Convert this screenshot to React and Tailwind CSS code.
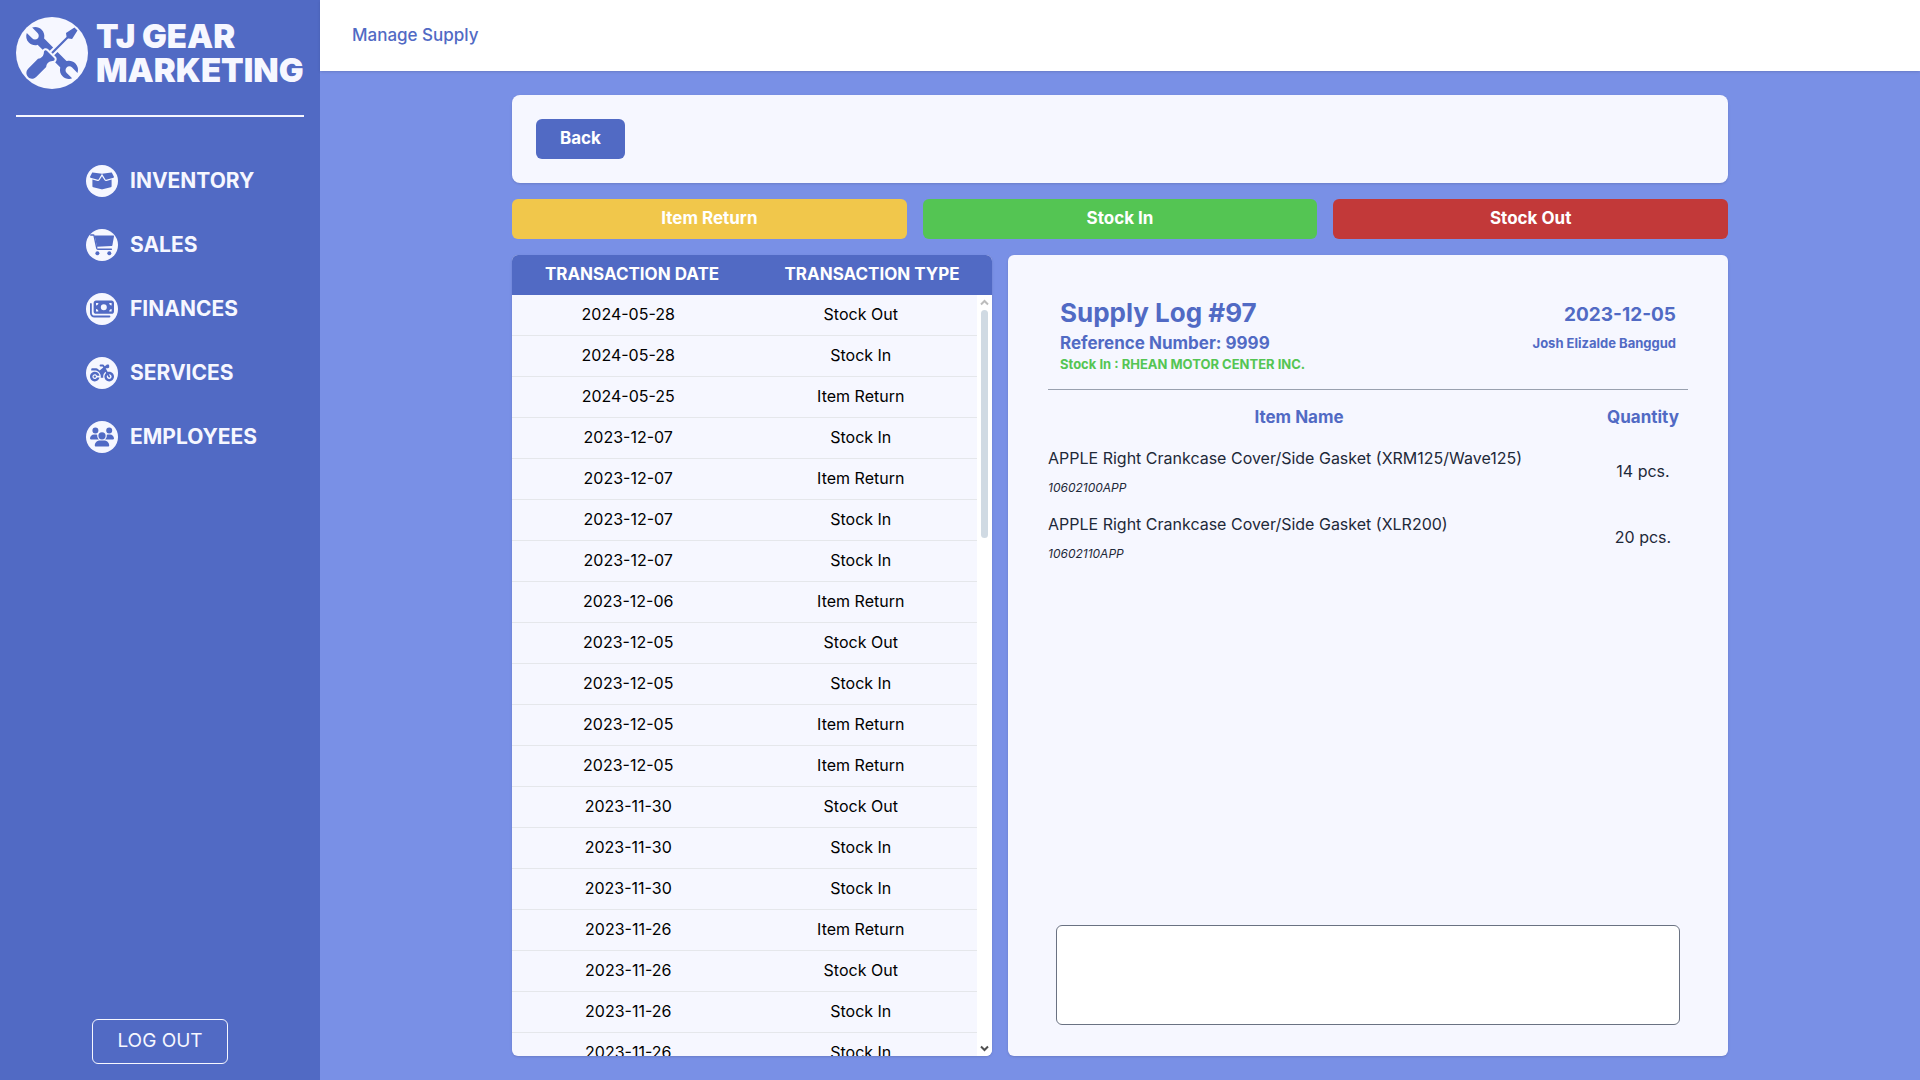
import React from "react";
import { FaBoxOpen } from "react-icons/fa";
import { FaMoneyBills, FaMotorcycle, FaUsers } from "react-icons/fa6";
import { GiTinker } from "react-icons/gi";

function CartIcon({ className }) {
  return (
    <svg className={className} viewBox="0 0 24 24" fill="currentColor" aria-hidden="true">
      <path d="M4.6 2.4H23.4Q24.2 2.4 24 3.3L22.4 12.2Q22.2 13 21.3 13.1L7 13.7Z" />
      <path
        d="M.7 2H3.2Q3.9 2 4.1 2.8L6.8 15.4Q7 16.2 7.8 16.2H21.4"
        fill="none"
        stroke="currentColor"
        strokeWidth="1.4"
        strokeLinecap="round"
      />
      <circle cx="7.4" cy="20.3" r="2" />
      <circle cx="19.3" cy="20.3" r="2" />
    </svg>
  );
}

const navItems = [
  { label: "INVENTORY", Icon: FaBoxOpen },
  { label: "SALES", Icon: CartIcon },
  { label: "FINANCES", Icon: FaMoneyBills },
  { label: "SERVICES", Icon: FaMotorcycle },
  { label: "EMPLOYEES", Icon: FaUsers },
];

const transactions = [
  ["2024-05-28", "Stock Out"],
  ["2024-05-28", "Stock In"],
  ["2024-05-25", "Item Return"],
  ["2023-12-07", "Stock In"],
  ["2023-12-07", "Item Return"],
  ["2023-12-07", "Stock In"],
  ["2023-12-07", "Stock In"],
  ["2023-12-06", "Item Return"],
  ["2023-12-05", "Stock Out"],
  ["2023-12-05", "Stock In"],
  ["2023-12-05", "Item Return"],
  ["2023-12-05", "Item Return"],
  ["2023-11-30", "Stock Out"],
  ["2023-11-30", "Stock In"],
  ["2023-11-30", "Stock In"],
  ["2023-11-26", "Item Return"],
  ["2023-11-26", "Stock Out"],
  ["2023-11-26", "Stock In"],
  ["2023-11-26", "Stock In"],
];

const items = [
  { name: "APPLE Right Crankcase Cover/Side Gasket (XRM125/Wave125)", code: "10602100APP", qty: "14 pcs." },
  { name: "APPLE Right Crankcase Cover/Side Gasket (XLR200)", code: "10602110APP", qty: "20 pcs." },
];

function Sidebar() {
  return (
    <aside className="flex w-80 shrink-0 flex-col bg-[#516ac4] px-4 pb-4 pt-[17px] text-[#f6f7ff]">
      <div className="flex items-center gap-2 border-b-2 border-[#f6f7ff] pb-[26px]">
        <span className="flex size-18 shrink-0 items-center justify-center rounded-full bg-[#f6f7ff] text-[#516ac4]">
          <GiTinker className="size-14 -scale-y-100" />
        </span>
        <p className="text-[33px] font-black leading-[34px] whitespace-nowrap">
          TJ GEAR
          <br />
          MARKETING
        </p>
      </div>
      <nav className="mt-12 flex flex-col gap-8 pl-[70px]">
        {navItems.map(({ label, Icon }) => (
          <a key={label} href="#" className="flex items-center gap-3 text-[21px] font-bold leading-8">
            <span className="flex size-8 items-center justify-center rounded-full bg-[#f6f7ff] text-[#516ac4]">
              <Icon className="size-6" />
            </span>
            {label}
          </a>
        ))}
      </nav>
      <button className="mt-auto h-[45px] self-center rounded-md border border-[#f6f7ff] px-6 text-[19px]">
        LOG OUT
      </button>
    </aside>
  );
}

function ScrollTrack() {
  return (
    <div className="flex w-[15px] shrink-0 flex-col items-center bg-white py-1">
      <svg className="mb-1 h-[7px] w-[9px] shrink-0" viewBox="0 0 9 7" fill="none" stroke="#bcbcbc" strokeWidth="2">
        <path d="M1 5.5 4.5 2 8 5.5" />
      </svg>
      <div className="min-h-0 flex-1">
        <div className="h-[31%] w-[7px] rounded-full bg-[#d0dae3]" />
      </div>
      <svg className="h-[7px] w-[9px] shrink-0" viewBox="0 0 9 7" fill="none" stroke="#505050" strokeWidth="2">
        <path d="M1 1.5 4.5 5 8 1.5" />
      </svg>
    </div>
  );
}

function Transactions() {
  return (
    <section className="flex min-h-0 flex-col overflow-hidden rounded-md bg-[#f6f7ff] shadow-sm">
      <div className="grid h-10 shrink-0 grid-cols-2 items-center bg-[#516ac4] text-center text-[17px] font-bold text-white">
        <span id="col-date">TRANSACTION DATE</span>
        <span id="col-type">TRANSACTION TYPE</span>
      </div>
      <div className="flex min-h-0 flex-1">
        <div className="min-w-0 flex-1 overflow-hidden">
          <table className="w-full table-fixed border-separate border-spacing-0 text-center text-base leading-6 text-black">
            <tbody>
              {transactions.map(([date, type], i) => (
                <tr key={i}>
                  <td headers="col-date" className="h-[41px] border-b border-gray-200 pb-1 pt-0.5">{date}</td>
                  <td headers="col-type" className="h-[41px] border-b border-gray-200 pb-1 pt-0.5">{type}</td>
                </tr>
              ))}
            </tbody>
          </table>
        </div>
        <ScrollTrack />
      </div>
    </section>
  );
}

function SupplyLog() {
  return (
    <section className="flex min-h-0 flex-col rounded-md bg-[#f6f7ff] px-10 pb-[31px] pt-10 shadow-sm">
      <header className="flex justify-between border-b border-gray-400 px-3 pb-4 font-bold text-[#516ac4]">
        <div>
          <h1 className="text-[26px] leading-9">Supply Log #97</h1>
          <p className="text-[17px] leading-6">Reference Number: 9999</p>
          <p className="text-[13px] leading-[18px] text-[#54c553]">Stock In : RHEAN MOTOR CENTER INC.</p>
        </div>
        <div className="text-right">
          <p className="text-[19px] leading-10">2023-12-05</p>
          <p className="text-[13px] leading-4">Josh Elizalde Banggud</p>
        </div>
      </header>
      <table className="mt-2 w-full text-base text-gray-800">
        <thead className="text-[17px] text-[#516ac4]">
          <tr className="h-10">
            <th className="pr-12">Item Name</th>
            <th className="w-[90px]">Quantity</th>
          </tr>
        </thead>
        <tbody>
          {items.map((item) => (
            <tr key={item.code} className="h-[66px]">
              <td>
                <p className="leading-6">{item.name}</p>
                <p className="mt-2.5 text-xs italic">{item.code}</p>
              </td>
              <td className="text-center">{item.qty}</td>
            </tr>
          ))}
        </tbody>
      </table>
      <div className="mt-auto px-2">
        <textarea
          aria-label="Remarks"
          className="block h-[100px] w-full resize-none rounded-md border border-gray-500 bg-white p-2"
        />
      </div>
    </section>
  );
}

export default function App() {
  return (
    <div className="flex h-screen bg-[#7990e6] font-[Inter,sans-serif]">
      <Sidebar />
      <div className="flex min-w-0 flex-1 flex-col">
        <header className="flex h-[71px] shrink-0 items-center bg-white px-8 shadow-sm">
          <h2 className="text-[17px] font-medium text-[#516ac4]">Manage Supply</h2>
        </header>
        <main className="mx-auto flex min-h-0 w-full max-w-7xl flex-1 flex-col gap-4 px-8 py-6">
          <div className="shrink-0 rounded-lg bg-[#f6f7ff] p-6 shadow-sm">
            <button className="h-10 rounded-md bg-[#516ac4] px-6 text-[17px] font-bold text-white">Back</button>
          </div>
          <div className="grid shrink-0 grid-cols-3 gap-4 text-[17px] font-bold text-white">
            <button className="h-10 rounded-md bg-[#f1c74b]">Item Return</button>
            <button className="h-10 rounded-md bg-[#54c553]">Stock In</button>
            <button className="h-10 rounded-md bg-[#c23939]">Stock Out</button>
          </div>
          <div className="grid min-h-0 flex-1 grid-cols-[2fr_3fr] grid-rows-[minmax(0,1fr)] gap-4">
            <Transactions />
            <SupplyLog />
          </div>
        </main>
      </div>
    </div>
  );
}
